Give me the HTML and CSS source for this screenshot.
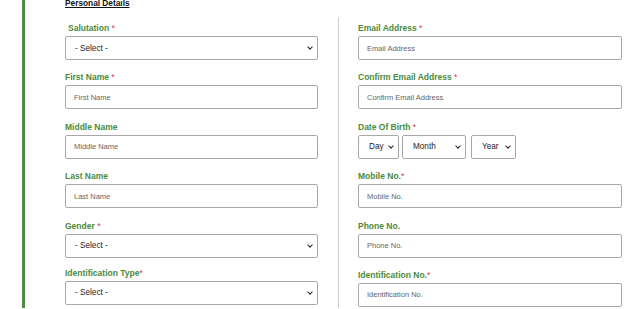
FILE: index.html
```html
<!DOCTYPE html>
<html lang="en">
<head>
<meta charset="utf-8">
<title>Personal Details</title>
<link rel="stylesheet" href="styles.css">
</head>
<body>
<div class="panel">
  <h3 class="heading">Personal Details</h3>
  <div class="cols">
    <div class="col col-left">
      <div class="field">
        <label class="label label-indent">Salutation <span class="req">*</span></label>
        <span class="select-wrap"><select class="control select"><option>- Select -</option></select></span>
      </div>
      <div class="field">
        <label class="label">First Name <span class="req">*</span></label>
        <input class="control input" type="text" placeholder="First Name">
      </div>
      <div class="field">
        <label class="label">Middle Name</label>
        <input class="control input" type="text" placeholder="Middle Name">
      </div>
      <div class="field">
        <label class="label">Last Name</label>
        <input class="control input" type="text" placeholder="Last Name">
      </div>
      <div class="field field-tight">
        <label class="label">Gender <span class="req">*</span></label>
        <span class="select-wrap"><select class="control select"><option>- Select -</option></select></span>
      </div>
      <div class="field">
        <label class="label">Identification Type<span class="req">*</span></label>
        <span class="select-wrap"><select class="control select"><option>- Select -</option></select></span>
      </div>
    </div>
    <div class="col col-right">
      <div class="field">
        <label class="label">Email Address <span class="req">*</span></label>
        <input class="control input" type="text" placeholder="Email Address">
      </div>
      <div class="field">
        <label class="label">Confirm Email Address <span class="req">*</span></label>
        <input class="control input" type="text" placeholder="Confirm Email Address">
      </div>
      <div class="field">
        <label class="label">Date Of Birth <span class="req">*</span></label>
        <div class="dob">
          <span class="select-wrap dob-day"><select class="control select"><option>Day</option></select></span>
          <span class="select-wrap dob-month"><select class="control select"><option>Month</option></select></span>
          <span class="select-wrap dob-year"><select class="control select"><option>Year</option></select></span>
        </div>
      </div>
      <div class="field">
        <label class="label">Mobile No.<span class="req">*</span></label>
        <input class="control input" type="text" placeholder="Mobile No.">
      </div>
      <div class="field">
        <label class="label">Phone No.</label>
        <input class="control input" type="text" placeholder="Phone No.">
      </div>
      <div class="field">
        <label class="label">Identification No.<span class="req">*</span></label>
        <input class="control input" type="text" placeholder="Identification No.">
      </div>
    </div>
  </div>
</div>
</body>
</html>
```

FILE: styles.css
```css
* { box-sizing: border-box; }

html, body {
  margin: 0;
  padding: 0;
  background: #ffffff;
  font-family: "Liberation Sans", Arial, sans-serif;
  overflow: hidden;
}

.panel {
  margin-left: 22px;
  border-left: 3px solid #4c8c45;
  padding-left: 40px;
  height: 309px;
}

.heading {
  margin: -1px 0 0 0;
  font-size: 8.3px;
  line-height: 9px;
  font-weight: bold;
  color: #111;
  text-decoration: underline;
}

.cols {
  display: flex;
  margin-top: 9px;
}

.col {
  display: flex;
  flex-direction: column;
  padding-top: 6px;
}

.col-left {
  width: 253px;
  margin-right: 20px;
}

.col-right {
  width: 284px;
  border-left: 1px solid #cfcfcf;
  padding-left: 19px;
  min-height: 300px;
}

.field {
  display: flex;
  flex-direction: column;
  margin-bottom: 12.4px;
}

.field-tight { margin-bottom: 10px; }

.label {
  display: block;
  font-size: 8.5px;
  line-height: 10px;
  font-weight: bold;
  color: #4b8a3d;
  margin-bottom: 3px;
}

.label-indent { padding-left: 3px; }

.req { color: #d23a3a; font-weight: normal; }

.control {
  height: 24px;
  border: 1px solid #a8a8a8;
  border-radius: 2px;
  background: #fff;
  font-family: "Liberation Sans", Arial, sans-serif;
  margin: 0;
}

.input {
  width: 100%;
  padding: 0 0 0 8px;
  font-size: 7.5px;
  color: #333;
}

.input::placeholder { color: #666; }

.select-wrap {
  position: relative;
  display: block;
}

.select-wrap::after {
  content: "";
  position: absolute;
  right: 6px;
  top: 50%;
  width: 3px;
  height: 3px;
  margin-top: -3px;
  border-right: 1.5px solid #222;
  border-bottom: 1.5px solid #222;
  transform: rotate(45deg);
  pointer-events: none;
}

.select {
  -webkit-appearance: none;
  appearance: none;
  display: block;
  width: 100%;
  padding: 0 0 0 9px;
  font-size: 8.2px;
  color: #222;
}

.dob {
  display: flex;
}

.dob-day { width: 41px; margin-right: 3px; }
.dob-month { width: 64px; margin-right: 5px; }
.dob-year { width: 45px; }
.dob .select { padding-left: 10px; }
```
